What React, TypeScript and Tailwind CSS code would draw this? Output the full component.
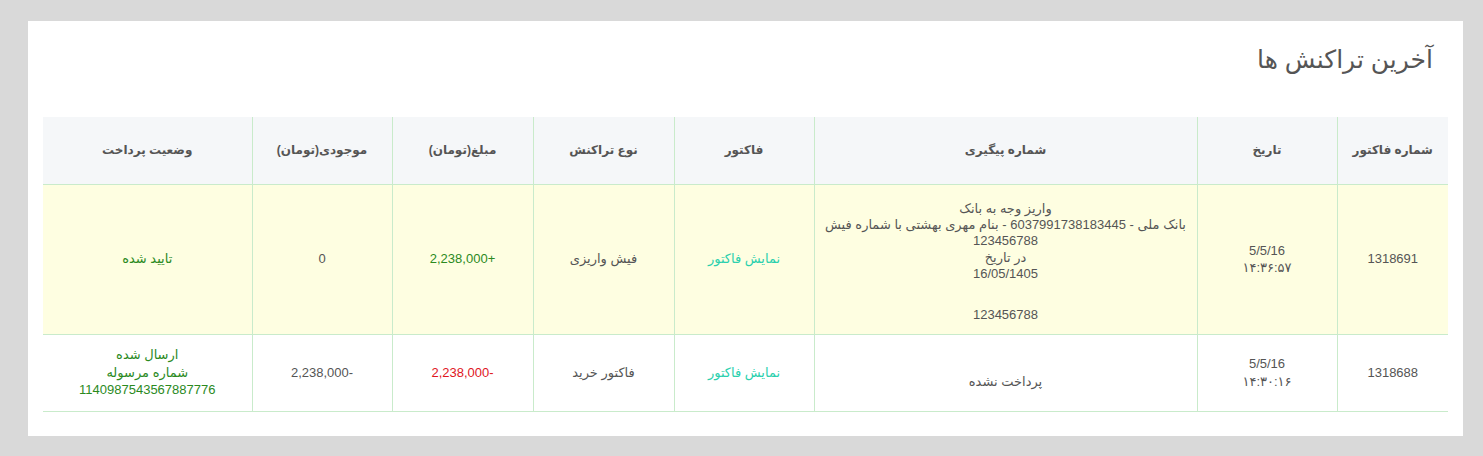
const font = { fontFamily: '"Liberation Sans", "DejaVu Sans", sans-serif' };

type Row = {
  invoice: string;
  date: string;
  time: string;
  tracking: React.ReactNode;
  kind: string;
  amount: string;
  amountClass: string;
  balance: string;
  status: React.ReactNode;
  rowClass: string;
  height: string;
};

const headers = [
  "شماره فاکتور",
  "تاریخ",
  "شماره پیگیری",
  "فاکتور",
  "نوع تراکنش",
  "مبلغ(تومان)",
  "موجودی(تومان)",
  "وضعیت پرداخت",
];

const widths = ["w-[111px]", "w-[140px]", "w-[383px]", "w-[140px]", "w-[141px]", "w-[141px]", "w-[140px]", "w-[209px]"];

const rows: Row[] = [
  {
    invoice: "1318691",
    date: "5/5/16",
    time: "۱۴:۳۶:۵۷",
    tracking: (
      <div className="pt-[6px] leading-[16.3px]">
        <div>واریز وجه به بانک</div>
        <div>بانک ملی - 6037991738183445 - بنام مهری بهشتی با شماره فیش</div>
        <div>123456788</div>
        <div>در تاریخ</div>
        <div>16/05/1405</div>
        <div className="h-[25px]" />
        <div>123456788</div>
      </div>
    ),
    kind: "فیش واریزی",
    amount: "+2,238,000",
    amountClass: "text-[#2b8a1e]",
    balance: "0",
    status: <span className="text-[#2b8a1e]">تایید شده</span>,
    rowClass: "bg-[#fefee1]",
    height: "h-[150px]",
  },
  {
    invoice: "1318688",
    date: "5/5/16",
    time: "۱۴:۳۰:۱۶",
    tracking: (
      <div className="leading-[17.5px]">
        <div className="h-[17.5px]" />
        <div>پرداخت نشده</div>
      </div>
    ),
    kind: "فاکتور خرید",
    amount: "-2,238,000",
    amountClass: "text-[#e0161e]",
    balance: "-2,238,000",
    status: (
      <div className="leading-[17.5px] text-[#2b8a1e]">
        <div>ارسال شده</div>
        <div>شماره مرسوله</div>
        <div>1140987543567887776</div>
      </div>
    ),
    rowClass: "bg-white",
    height: "h-[77px]",
  },
];

function Cell({ children, first, className = "" }: { children: React.ReactNode; first: boolean; className?: string }) {
  return (
    <td className={`border-t border-[#c9ebcb] px-2 text-center align-middle ${first ? "" : "border-r"} ${className}`}>
      {children}
    </td>
  );
}

export default function App() {
  return (
    <div className="min-h-[456px] bg-[#d9d9d9] pb-[21px] pl-[28px] pr-[20px] pt-[21px]" style={font}>
      <div dir="rtl" className="bg-white px-[15px] pb-[24px]">
        <h2 className="pr-[15px] pt-[22px] pb-[42px] text-[25px] leading-[32px] font-normal text-[#555555]">
          آخرین تراکنش ها
        </h2>
        <table className="w-full table-fixed border-collapse text-[13px] text-[#555555]">
          <thead>
            <tr className="h-[67px] bg-[#f5f7f9]">
              {headers.map((h, i) => (
                <th
                  key={h}
                  className={`${widths[i]} px-2 text-center align-middle text-[12px] font-bold text-[#555555] ${i === 0 ? "" : "border-r border-[#c9ebcb]"}`}
                >
                  {h}
                </th>
              ))}
            </tr>
          </thead>
          <tbody>
            {rows.map((r) => (
              <tr key={r.invoice} className={`${r.rowClass} ${r.height}`}>
                <Cell first>{r.invoice}</Cell>
                <Cell first={false}>
                  <div className="leading-[17.5px]">
                    <div>{r.date}</div>
                    <div>{r.time}</div>
                  </div>
                </Cell>
                <Cell first={false}>{r.tracking}</Cell>
                <Cell first={false}>
                  <a className="text-[#2ad0ad]">نمایش فاکتور</a>
                </Cell>
                <Cell first={false}>{r.kind}</Cell>
                <Cell first={false} className={r.amountClass}>{r.amount}</Cell>
                <Cell first={false}>{r.balance}</Cell>
                <Cell first={false}>{r.status}</Cell>
              </tr>
            ))}
            <tr>
              <td colSpan={8} className="border-t border-[#c9ebcb] p-0" />
            </tr>
          </tbody>
        </table>
      </div>
    </div>
  );
}
